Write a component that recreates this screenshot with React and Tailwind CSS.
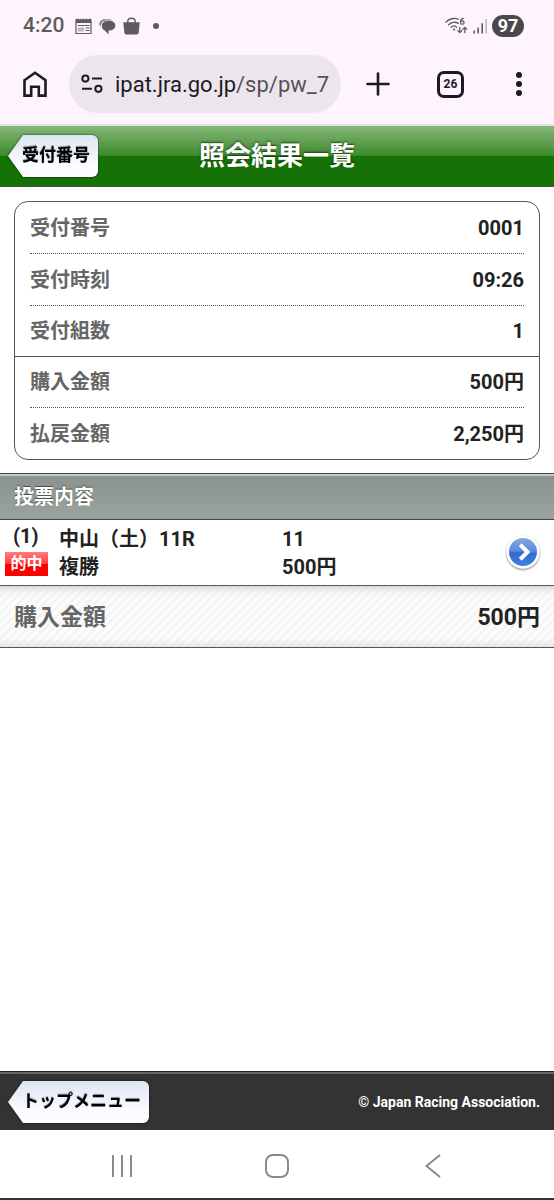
import React from 'react';

const summary = [
  { label: '受付番号', value: '0001' },
  { label: '受付時刻', value: '09:26' },
  { label: '受付組数', value: '1' },
];

const amounts = [
  { label: '購入金額', value: '500円' },
  { label: '払戻金額', value: '2,250円' },
];

function StatusBar() {
  return (
    <div className="flex items-center justify-between h-[52px] pl-[23px] pr-[30px] text-[#5f5a60]">
      <div className="flex items-center">
        <span className="text-[21px] font-medium w-[52px]">4:20</span>
        <svg className="w-[17px] h-[17px]" viewBox="0 0 17 17" fill="none" stroke="currentColor">
          <path d="M1 4V15.5H16V4" strokeWidth="1.2" />
          <path d="M0.5 1H2L3 0.5L4 1.5L5.5 0.5L7 1.5L8.5 0.5L10 1.5L11.5 0.5L13 1.5L14.5 0.5L16.5 1.2V5H0.5Z" fill="currentColor" stroke="none" />
          <path d="M3 7.5H14.5M10.5 10H14.5M10.5 12.5H14.5" strokeWidth="1" />
          <path d="M3 9.5H9V13.5H3Z" fill="currentColor" stroke="none" opacity="0.4" />
        </svg>
        <svg className="w-[17px] h-[17px] ml-[7px]" viewBox="0 0 17 17" fill="currentColor">
          <path d="M0.3 6.5C0.3 3 3 1.2 6 1.2H9.5C11.5 1.2 12.6 1.7 13.2 2.4H7.5C4.4 2.4 2 4.5 1.6 8.3C0.8 7.9 0.3 7.4 0.3 6.5Z" opacity="0.75" />
          <path d="M8.2 3H11.3C14.4 3 16.3 5 16.3 7.6C16.3 10.6 14 12.4 11 12.4H9.6V16.6L5.8 12.4C3.8 11.6 2.8 10 2.8 8C2.8 5 5 3 8.2 3Z" />
        </svg>
        <svg className="w-[17px] h-[18px] ml-[7px]" viewBox="0 0 17 18" fill="none">
          <path d="M0.3 5.2H16.7L15.7 15.2C15.5 16.8 14.6 17.6 13.2 17.6H3.8C2.4 17.6 1.5 16.8 1.3 15.2Z" fill="currentColor" />
          <path d="M4.8 6V4.4C4.8 0.2 12.2 0.2 12.2 4.4V6" stroke="currentColor" strokeWidth="1.5" />
        </svg>
        <span className="w-1.5 h-1.5 ml-[13px] rounded-full bg-[#5f5a60]" />
      </div>
      <div className="flex items-center">
        <svg className="w-6 h-[18px]" viewBox="0 0 24 18" fill="none" stroke="currentColor" strokeWidth="1.3" strokeLinecap="round">
          <path d="M1 5.2C4 1.6 9.5 0.6 13 2.2M3.6 7.7C6 5 10.5 4.4 13.4 6.6M6.2 10.3C8 8.6 10.2 8.8 11.6 10.2" />
          <circle cx="9" cy="12.6" r="1.1" fill="currentColor" stroke="none" />
          <path d="M18.3 1.3C16.4 1.8 15.5 3.4 15.5 5" />
          <circle cx="17.3" cy="5.6" r="1.8" />
          <path d="M14.8 10.5V15.5M12.8 13.6L14.8 15.6L16.8 13.6M19.8 15.5V10.5M17.8 12.4L19.8 10.4L21.8 12.4" />
        </svg>
        <svg className="w-[15px] h-4 ml-1" viewBox="0 0 15 16" stroke="currentColor" strokeWidth="1.6">
          <path d="M1.2 12.6V15.5M5.2 9.5V15.5M9.2 5.2V15.5" />
          <path d="M13.2 1V15.5" opacity="0.4" />
        </svg>
        <span className="flex items-center justify-center w-8 h-[22px] ml-1 rounded-full bg-[#4b474c] text-white text-lg font-bold">97</span>
      </div>
    </div>
  );
}

function BrowserBar() {
  return (
    <div className="flex items-center h-16 pl-[23px] pr-[29px] text-[#1c1a1f]">
      <button type="button" aria-label="ホーム">
        <svg className="w-6 h-[26px]" viewBox="0 0 24 26" fill="none" stroke="currentColor" strokeWidth="2.6">
          <path d="M1.5 9.2L12 1.8L22.5 9.2V24.6H15.8V15.8H8.2V24.6H1.5Z" />
        </svg>
      </button>
      <div className="flex items-center flex-1 min-w-0 h-[58px] ml-[22px] pl-3 pr-2 rounded-full bg-[#ece6ec]">
        <button type="button" aria-label="サイト情報" className="shrink-0">
          <svg className="w-[22px] h-5" viewBox="0 0 22 20" fill="none" stroke="currentColor" strokeWidth="2">
            <circle cx="4.4" cy="4.6" r="3.1" />
            <path d="M11 4.6H21M1 14.8H11" />
            <circle cx="17.4" cy="14.8" r="3.1" />
          </svg>
        </button>
        <button type="button" className="flex-1 min-w-0 ml-3 overflow-hidden whitespace-nowrap text-left text-[22px]">
          ipat.jra.go.jp<span className="text-[#565158]">/sp/pw_7</span>
        </button>
      </div>
      <button type="button" aria-label="新しいタブ" className="ml-[25px]">
        <svg className="w-6 h-6" viewBox="0 0 24 24" stroke="currentColor" strokeWidth="2.6" strokeLinecap="round">
          <path d="M12 1.5V22.5M1.5 12H22.5" />
        </svg>
      </button>
      <button type="button" className="flex items-center justify-center w-[27px] h-[27px] ml-[47px] rounded-[7px] border-[3px] border-[#1c1a1f] text-xs font-bold">
        26
      </button>
      <button type="button" aria-label="メニュー" className="ml-[49px]">
        <svg className="w-3 h-6" viewBox="0 0 12 24" fill="currentColor">
          <circle cx="6" cy="3" r="3" />
          <circle cx="6" cy="12" r="3" />
          <circle cx="6" cy="21" r="3" />
        </svg>
      </button>
    </div>
  );
}

// Pill with the pointed left edge, used in the header and in the footer
function BackLink({ children }) {
  return (
    <a href="#" className="justify-self-start drop-shadow-[0_0_1px_rgba(0,0,0,0.7)]">
      <span className="flex items-center h-[42px] px-3.5 pr-2 rounded-r-md bg-linear-to-b from-[#dce5f2] to-[#fbfcff] to-70% text-[17px] font-bold text-black whitespace-nowrap [clip-path:polygon(0_50%,15px_0,100%_0,100%_100%,15px_100%)] [text-shadow:0_-1px_1px_rgba(0,0,0,0.45)]">
        {children}
      </span>
    </a>
  );
}

function Row({ label, value, className }) {
  return (
    <div className={`flex items-center justify-between border-[#555] ${className}`}>
      <dt className="text-[#666]">{label}</dt>
      <dd className="text-[#222]">{value}</dd>
    </div>
  );
}

function ArrowIcon() {
  return (
    <svg className="w-9 h-10" viewBox="0 0 36 40">
      <defs>
        <linearGradient id="blue" x1="0" y1="0" x2="0" y2="1">
          <stop offset="0" stopColor="#86a9e0" />
          <stop offset="0.46" stopColor="#5a8add" />
          <stop offset="0.54" stopColor="#2f6bd4" />
          <stop offset="1" stopColor="#3f7fe4" />
        </linearGradient>
        <filter id="shade" x="-20%" y="-20%" width="140%" height="150%">
          <feDropShadow dx="0" dy="1" stdDeviation="1.2" floodColor="#000" floodOpacity="0.6" />
        </filter>
      </defs>
      <circle cx="18" cy="19" r="16.5" fill="#fff" filter="url(#shade)" />
      <circle cx="18" cy="19" r="14" fill="url(#blue)" />
      <path d="M15.2 11.8L22.6 19L15.2 26.2" fill="none" stroke="#fff" strokeWidth="4" />
    </svg>
  );
}

function SystemNav() {
  return (
    <nav className="grid grid-cols-3 items-center justify-items-center h-[70px] px-11 pt-1 bg-white border-b-2 border-[#333] text-[#8a8a8a]">
      <button type="button" aria-label="履歴">
        <svg className="w-6 h-6" viewBox="0 0 24 24" stroke="currentColor" strokeWidth="2">
          <path d="M3 1V23M12 1V23M21 1V23" />
        </svg>
      </button>
      <button type="button" aria-label="ホーム画面">
        <svg className="w-6 h-6" viewBox="0 0 24 24" fill="none" stroke="currentColor" strokeWidth="2">
          <rect x="1" y="1" width="22" height="22" rx="7" />
        </svg>
      </button>
      <button type="button" aria-label="戻る">
        <svg className="w-6 h-6" viewBox="0 0 24 24" fill="none" stroke="currentColor" strokeWidth="2">
          <path d="M20 1L6.500 12L20 23" />
        </svg>
      </button>
    </nav>
  );
}

export default function App() {
  return (
    <div className="flex flex-col min-h-screen bg-white font-['Roboto','Noto_Sans_CJK_JP',sans-serif]">
      <div className="h-[126px] bg-[#fef4fe] border-b-2 border-[#e6e2e6]">
        <StatusBar />
        <BrowserBar />
      </div>

      <header className="grid grid-cols-[1fr_auto_1fr] items-center h-[61px] px-2 border-b border-[#3a5a36] bg-[linear-gradient(to_bottom,#85b878_0%,#3f8a2e_49%,#157303_50%,#167008_100%)]">
        <BackLink>受付番号</BackLink>
        <h1 className="text-[26px] leading-8 font-bold text-white [text-shadow:0_-1px_2px_rgba(0,0,0,0.6)]">照会結果一覧</h1>
      </header>

      <main className="flex-1 font-bold">
        <dl className="mx-3.5 mt-3.5 mb-[13px] border border-[#555] rounded-[14px] text-xl">
          <div className="px-[15px] border-b border-[#555]">
            {summary.map((item) => (
              <Row key={item.label} {...item} className="h-[52px] border-b border-dotted last:border-b-0 last:h-[50px]" />
            ))}
          </div>
          <div className="px-[15px]">
            {amounts.map((item) => (
              <Row key={item.label} {...item} className="h-[51px] border-b border-dotted last:border-b-0" />
            ))}
          </div>
        </dl>

        <h2 className="flex items-center h-[47px] px-3.5 border-y border-[#444] bg-linear-to-b from-[#89928c] to-[#9aa39d] text-xl text-white shadow-[inset_0_2px_0_#c4cac6] [text-shadow:0_-1px_1px_rgba(0,0,0,0.5)]">
          投票内容
        </h2>

        <a href="#" className="grid grid-cols-[54px_1fr_1fr_36px] items-center h-[66px] pl-[5px] pr-[13px] border-b border-[#555] text-xl leading-7 text-[#222]">
          <div className="self-start">
            <p className="px-2 leading-8">(1)</p>
            <p className="flex items-center justify-center w-[43px] h-6 bg-[linear-gradient(to_bottom,#ff8080_0%,#ff3c3c_49%,#f00_50%,#f00_100%)] text-base text-white">的中</p>
          </div>
          <div>
            <p>中山（土）11R</p>
            <p>複勝</p>
          </div>
          <div>
            <p>11</p>
            <p>500円</p>
          </div>
          <ArrowIcon />
        </a>

        <div className="flex items-center justify-between h-[62px] px-3.5 pt-1 border-b border-[#555] text-[23px] shadow-[inset_0_10px_8px_-8px_#ccc,inset_0_-10px_8px_-8px_#ddd] bg-[repeating-linear-gradient(135deg,#f5f5f5_0px,#f5f5f5_3px,#fdfdfd_3px,#fdfdfd_6px)]">
          <span className="text-[#666]">購入金額</span>
          <span className="text-[#222]">500円</span>
        </div>
      </main>

      <footer className="flex items-center justify-between h-[59px] pl-2 pr-3.5 pt-0.5 border-t border-[#222] bg-[#333] shadow-[inset_0_2px_0_#666]">
        <BackLink>トップメニュー</BackLink>
        <small className="text-sm font-bold text-white">© Japan Racing Association.</small>
      </footer>

      <SystemNav />
    </div>
  );
}
